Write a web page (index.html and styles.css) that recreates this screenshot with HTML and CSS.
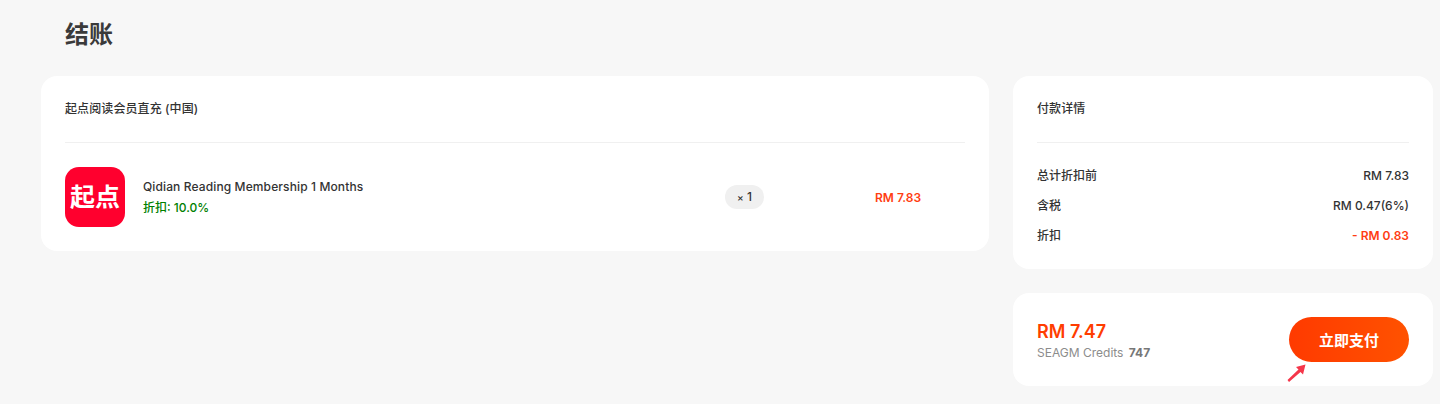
FILE: index.html
```html
<!DOCTYPE html>
<html lang="zh-CN">
<head>
    <meta charset="UTF-8">
    <title>结账</title>
    <link rel="stylesheet" href="styles.css">
</head>
<body>
    <h1 class="page-title">结账</h1>

    <div class="checkout">
        <div class="card order-card">
            <div class="card-head">起点阅读会员直充 (中国)</div>
            <div class="order-item">
                <div class="app-logo">起点</div>
                <div class="item-info">
                    <div class="item-name">Qidian Reading Membership 1 Months</div>
                    <div class="item-discount">折扣: 10.0%</div>
                </div>
                <div class="item-qty"><span class="qty-x">×</span> 1</div>
                <div class="item-price">RM 7.83</div>
            </div>
        </div>

        <div class="side">
            <div class="card details-card">
                <div class="card-head">付款详情</div>
                <div class="detail-rows">
                    <div class="detail-row"><span>总计折扣前</span><span>RM 7.83</span></div>
                    <div class="detail-row"><span>含税</span><span>RM 0.47(6%)</span></div>
                    <div class="detail-row"><span>折扣</span><span class="minus">- RM 0.83</span></div>
                </div>
            </div>

            <div class="card pay-card">
                <div class="pay-info">
                    <div class="pay-total">RM 7.47</div>
                    <div class="pay-credits">SEAGM Credits <b>747</b></div>
                </div>
                <button class="pay-btn">立即支付</button>
                <svg class="pay-arrow" width="20" height="18" viewBox="0 0 20 18">
                    <path d="M18.5 0.5 L9 3 L11.5 5.5 L0.5 16 L2 18 L13.5 8 L16 10.5 Z" fill="#f5364a"/>
                </svg>
            </div>
        </div>
    </div>
</body>
</html>
```

FILE: styles.css
```css
* {
    box-sizing: border-box;
}

body {
    margin: 0;
    padding: 0 7px 0 41px;
    background-color: #f7f7f7;
    color: #333;
    font-family: 'Inter', 'Noto Sans CJK SC', sans-serif;
    font-size: 12px;
    overflow: hidden;
}

.page-title {
    margin: 0;
    padding: 18px 24px 0;
    height: 76px;
    font-size: 24px;
    line-height: 34px;
    font-weight: 700;
    color: #3a3a3a;
}

.checkout {
    display: flex;
    align-items: flex-start;
    gap: 24px;
}

.card {
    background-color: #fff;
    border-radius: 16px;
    padding: 24px;
}

.order-card {
    width: 948px;
    height: 175px;
}

.card-head {
    height: 43px;
    line-height: 17px;
    font-weight: 500;
    letter-spacing: 0.1px;
    border-bottom: 1px solid #f0f0f0;
}

.order-item {
    display: flex;
    align-items: center;
    padding-top: 24px;
}

.app-logo {
    flex: none;
    width: 60px;
    height: 60px;
    border-radius: 14px;
    background-color: #ff002e;
    color: #fff;
    font-size: 25px;
    font-weight: 700;
    line-height: 60px;
    text-align: center;
}

.item-info {
    flex: none;
    width: 582px;
    margin-left: 18px;
}

.item-name {
    line-height: 20px;
    font-weight: 500;
    letter-spacing: 0.12px;
}

.item-discount {
    margin-top: 1px;
    line-height: 20px;
    font-weight: 500;
    color: #008000;
}

.item-qty {
    flex: none;
    width: 39px;
    height: 24px;
    line-height: 24px;
    border-radius: 12px;
    background-color: #f0f0f0;
    text-align: center;
    font-weight: 500;
}

.qty-x {
    font-size: 10px;
}

.item-price {
    flex: none;
    padding-left: 111px;
    font-weight: 600;
    color: #ff3d12;
}

.side {
    width: 420px;
    display: flex;
    flex-direction: column;
    gap: 24px;
}

.details-card {
    height: 193px;
}

.detail-rows {
    padding-top: 18px;
}

.detail-row {
    display: flex;
    justify-content: space-between;
    height: 30px;
    line-height: 30px;
    font-weight: 500;
}

.minus {
    color: #ff3d12;
    font-weight: 600;
}

.pay-card {
    position: relative;
    height: 93px;
    display: flex;
    align-items: center;
    justify-content: space-between;
}

.pay-total {
    margin-top: 2px;
    font-size: 18px;
    line-height: 24px;
    font-weight: 600;
    color: #ff3d00;
}

.pay-credits {
    line-height: 17px;
    color: #8c8c8c;
}

.pay-credits b {
    margin-left: 2px;
    font-weight: 700;
    color: #777;
}

.pay-btn {
    width: 120px;
    height: 45px;
    border: none;
    border-radius: 23px;
    background: linear-gradient(90deg, #ff3a00, #ff5200);
    color: #fff;
    font-family: 'Noto Sans CJK SC', sans-serif;
    font-size: 15px;
    font-weight: 700;
}

.pay-arrow {
    position: absolute;
    left: 274px;
    top: 71px;
}
```
